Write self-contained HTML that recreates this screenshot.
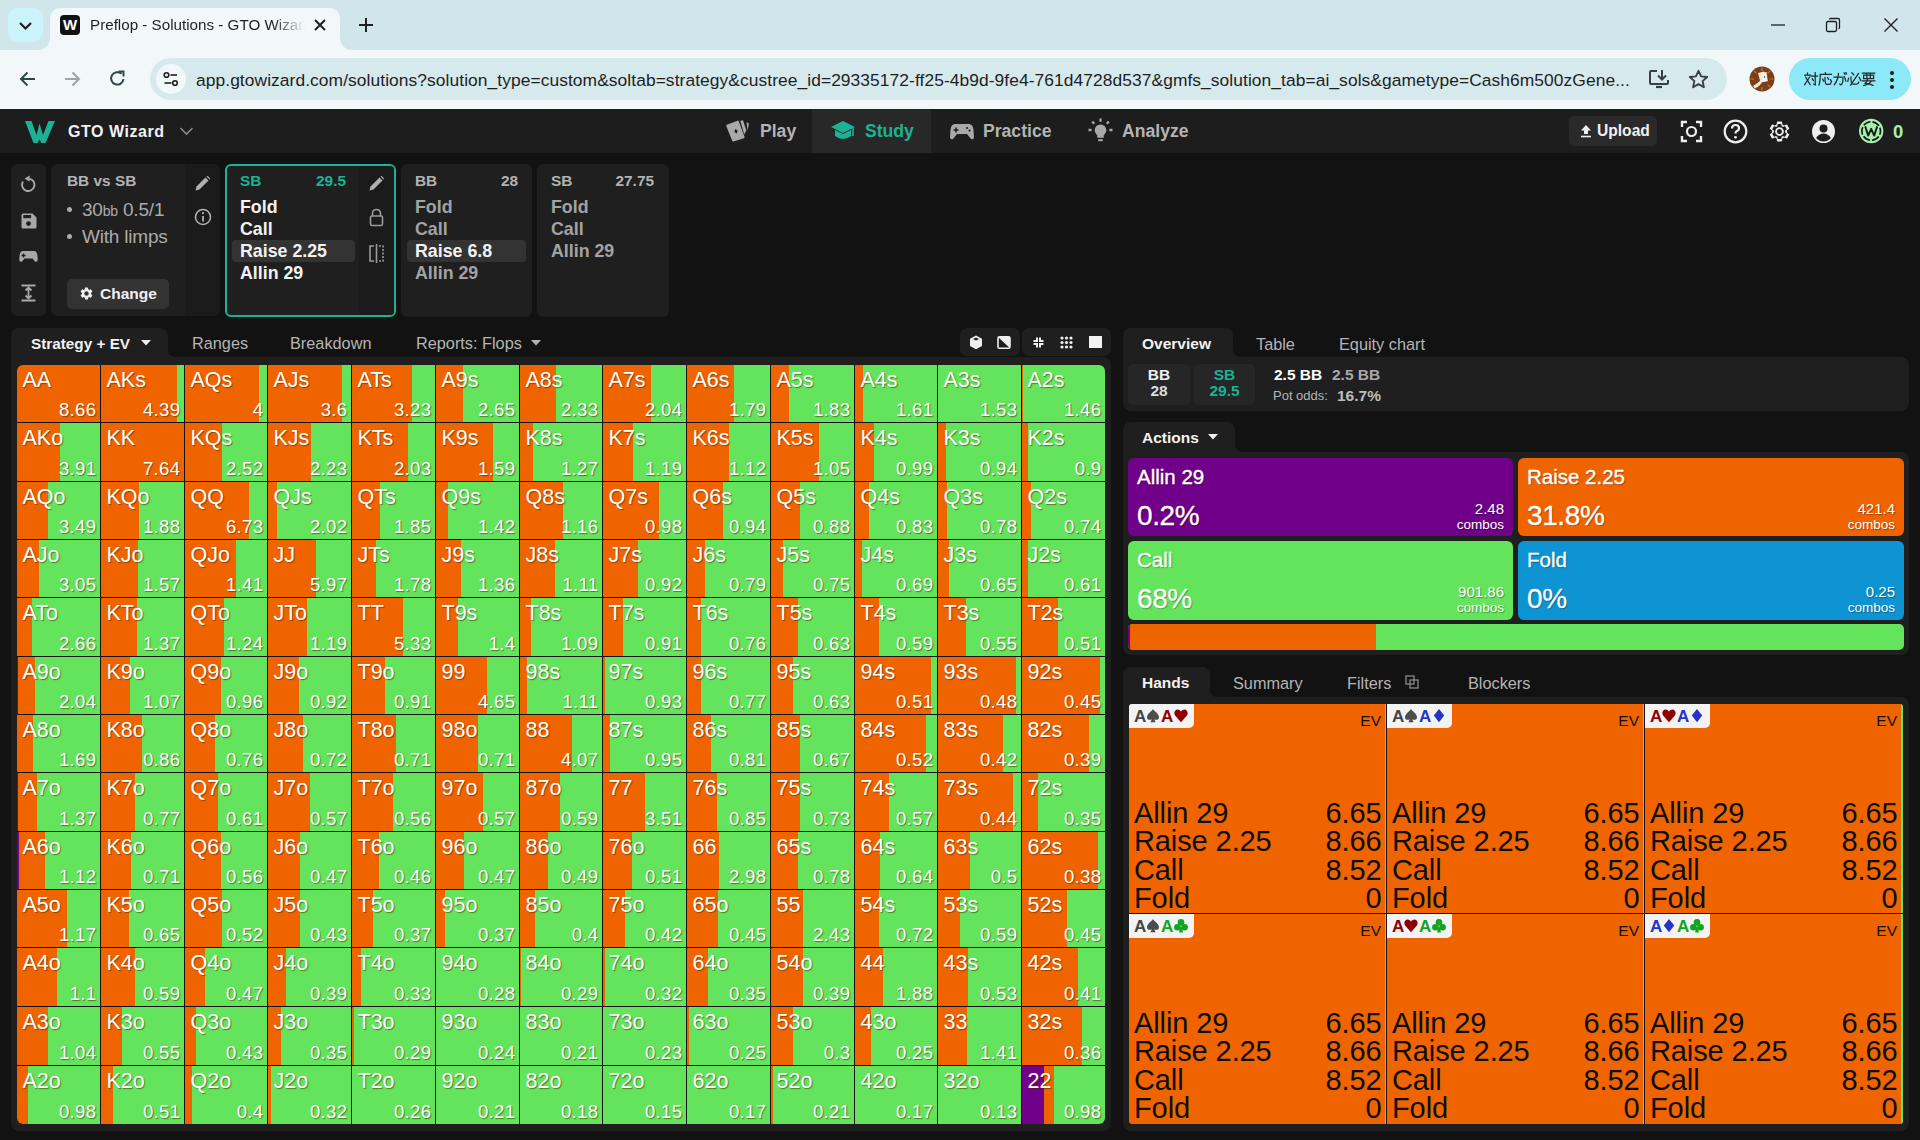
<!DOCTYPE html>
<html><head><meta charset="utf-8">
<style>
*{box-sizing:border-box}
html,body{margin:0;padding:0}
body{width:1920px;height:1140px;overflow:hidden;background:#121212;font-family:"Liberation Sans",sans-serif;position:relative;color:#fff}
.a{position:absolute}
svg{display:block}
/* chrome */
#tabstrip{left:0;top:0;width:1920px;height:50px;background:#d0e6ea}
#tsbtn{left:8px;top:8px;width:35px;height:34px;border-radius:10px;background:#cbf5fb}
#tab{left:50px;top:8px;width:290px;height:42px;background:#f2f8f9;border-radius:10px 10px 0 0}
#toolbar{left:0;top:50px;width:1920px;height:59px;background:#f2f8f9}
#url{left:150px;top:58px;width:1577px;height:42px;border-radius:21px;background:#d6e9ed}
.urltext{left:196px;top:69.5px;font-size:17.4px;color:#1f1f1f;white-space:nowrap;letter-spacing:0.07px}
#pill{left:1789px;top:58px;width:122px;height:42px;border-radius:21px;background:#8de9f7}
/* header */
#hdr{left:0;top:109px;width:1920px;height:44px;background:#1d1d1d}
.nav{font-size:17.6px;font-weight:bold;color:#b4b4b4;top:121px}
/* top cards */
.panel{background:#1f1f1f;border-radius:6px}
.t16b{font-size:15.4px;font-weight:bold}
.act{font-size:17.8px;font-weight:bold;line-height:22px}
/* grid */
.cell{position:absolute;overflow:hidden}
.cell i{position:absolute;top:0;bottom:0}
.cell b{position:absolute;left:5.5px;top:3px;font-weight:normal;font-size:21.5px;letter-spacing:0px;color:#fff;text-shadow:1px 1px 1px rgba(60,40,0,.55);white-space:nowrap}
.cell u{position:absolute;right:3.6px;bottom:1px;text-decoration:none;font-size:18.5px;letter-spacing:0.35px;color:#fff;text-shadow:1px 1px 1px rgba(60,40,0,.55)}
.tab{font-size:16.3px;color:#b5b5b5}
/* action cards */
.acard{border-radius:6px;overflow:hidden}
.acard .nm{position:absolute;left:9px;top:7px;font-size:20.5px;-webkit-text-stroke:0.35px #fff;color:#fff;text-shadow:1px 1px 1px rgba(0,0,0,.35)}
.acard .pc{position:absolute;left:9px;top:42px;font-size:28px;letter-spacing:-0.4px;-webkit-text-stroke:0.3px #fff;color:#fff;text-shadow:1px 1px 1px rgba(0,0,0,.35)}
.acard .cb{position:absolute;right:9px;top:43px;font-size:15px;text-align:right;line-height:15px;color:#fff;text-shadow:1px 1px 1px rgba(0,0,0,.35)}
.acard .cb span{font-size:13.5px}
/* hand cards */
.hc{position:absolute;background:#f06400;overflow:hidden}
.hc .lb{position:absolute;left:0;top:0;width:65px;height:24px;background:#f3f3f3;border-bottom-right-radius:5px;font-size:17px;font-weight:bold;white-space:nowrap}
.hc .ev{position:absolute;right:5px;top:8px;font-size:15.5px;color:#111}
.hc .rows{position:absolute;left:5px;right:4.5px;top:94.5px;font-size:29px;line-height:28.5px;color:#0d0d0d;letter-spacing:-0.1px}
.hc .rows div{display:flex;justify-content:space-between}
</style></head><body>
<svg width="0" height="0" style="position:absolute"><defs>
<path id="sp" d="M7 0 C8.5 2.5 13 5 13 8.2 C13 10.6 10.6 11.6 8.2 10.3 L9.6 13.3 H4.4 L5.8 10.3 C3.4 11.6 1 10.6 1 8.2 C1 5 5.5 2.5 7 0Z"/>
<path id="he" d="M7 13.2 L1.3 6.8 C-0.6 4.4 0.5 0.6 3.6 0.5 C5.3 0.5 6.4 1.5 7 2.7 C7.6 1.5 8.7 0.5 10.4 0.5 C13.5 0.6 14.6 4.4 12.7 6.8 Z"/>
<path id="di" d="M7 0 L12.2 6.6 L7 13.2 L1.8 6.6 Z"/>
<g id="cl"><circle cx="7" cy="3.4" r="3.3"/><circle cx="3.4" cy="8.2" r="3.3"/><circle cx="10.6" cy="8.2" r="3.3"/><path d="M6.3 8 L5 13.6 H9 L7.7 8Z"/></g>
</defs></svg>

<!-- ============ BROWSER CHROME ============ -->
<div id="tabstrip" class="a"></div>
<div id="tab" class="a"></div>
<div id="toolbar" class="a"></div>
<div class="a" style="left:340px;top:38px;width:12px;height:12px;background:#f2f8f9"></div>
<div class="a" style="left:340px;top:37px;width:13px;height:13px;background:#d0e6ea;border-bottom-left-radius:12px"></div>
<div class="a" style="left:38px;top:38px;width:12px;height:12px;background:#f2f8f9"></div>
<div class="a" style="left:37px;top:37px;width:13px;height:13px;background:#d0e6ea;border-bottom-right-radius:12px"></div>
<div id="tsbtn" class="a"><svg width="35" height="34"><path d="M12 15 L17.5 20.5 L23 15" fill="none" stroke="#1f1f1f" stroke-width="2.2"/></svg></div>
<div class="a" style="left:60px;top:15px;width:20px;height:20px;background:#111;border-radius:4px;color:#fff;font-weight:bold;font-size:15px;text-align:center;line-height:20px">W</div>
<div class="a" style="left:90px;top:16px;font-size:15.2px;color:#1f1f1f;white-space:nowrap;width:215px;overflow:hidden;-webkit-mask-image:linear-gradient(90deg,#000 85%,transparent)">Preflop - Solutions - GTO Wizard</div>
<svg class="a" style="left:313px;top:18px" width="14" height="14"><path d="M2 2 L12 12 M12 2 L2 12" stroke="#1f1f1f" stroke-width="2"/></svg>
<svg class="a" style="left:358px;top:17px" width="16" height="16"><path d="M8 1 V15 M1 8 H15" stroke="#1f1f1f" stroke-width="2"/></svg>
<svg class="a" style="left:1770px;top:17px" width="16" height="16"><path d="M1 8 H15" stroke="#1f1f1f" stroke-width="1.3"/></svg>
<svg class="a" style="left:1825px;top:17px" width="16" height="16"><rect x="1.5" y="4.5" width="10" height="10" rx="1.5" fill="none" stroke="#1f1f1f" stroke-width="1.3"/><path d="M4.5 2.5 Q4.5 1.5 5.5 1.5 H13 Q14.5 1.5 14.5 3 V10.5 Q14.5 11.5 13.5 11.5" fill="none" stroke="#1f1f1f" stroke-width="1.3"/></svg>
<svg class="a" style="left:1883px;top:17px" width="16" height="16"><path d="M1.5 1.5 L14.5 14.5 M14.5 1.5 L1.5 14.5" stroke="#1f1f1f" stroke-width="1.4"/></svg>

<svg class="a" style="left:19px;top:71px" width="17" height="16"><path d="M16 8 H2 M8.5 1.5 L2 8 L8.5 14.5" fill="none" stroke="#2c464c" stroke-width="2"/></svg>
<svg class="a" style="left:64px;top:71px" width="17" height="16"><path d="M1 8 H15 M8.5 1.5 L15 8 L8.5 14.5" fill="none" stroke="#9aa5a8" stroke-width="2"/></svg>
<svg class="a" style="left:109px;top:70px" width="17" height="17"><path d="M14.5 9 A6.2 6.2 0 1 1 12.5 3.8" fill="none" stroke="#2c464c" stroke-width="2"/><path d="M9.5 1.5 H14.5 V6.5" fill="none" stroke="#2c464c" stroke-width="2"/></svg>
<div id="url" class="a"></div>
<div class="a" style="left:156px;top:64px;width:30px;height:30px;border-radius:15px;background:#f2f8f9"></div>
<svg class="a" style="left:163px;top:71px" width="16" height="16"><circle cx="3.5" cy="4" r="2.3" fill="none" stroke="#1f1f1f" stroke-width="1.6"/><path d="M7.5 4 H14" stroke="#1f1f1f" stroke-width="1.6"/><circle cx="12" cy="12" r="2.3" fill="none" stroke="#1f1f1f" stroke-width="1.6"/><path d="M1.5 12 H8.5" stroke="#1f1f1f" stroke-width="1.6"/></svg>
<div class="a urltext">app.gtowizard.com/solutions?solution_type=custom&amp;soltab=strategy&amp;custree_id=29335172-ff25-4b9d-9fe4-761d4728d537&amp;gmfs_solution_tab=ai_sols&amp;gametype=Cash6m500zGene...</div>
<svg class="a" style="left:1648px;top:68px" width="22" height="22"><path d="M9 3 H3 Q2 3 2 4 V15 Q2 16 3 16 H19 Q20 16 20 15 V12" fill="none" stroke="#3a3f41" stroke-width="2"/><path d="M14 2 V11 M10 7.5 L14 11.5 L18 7.5" fill="none" stroke="#3a3f41" stroke-width="2"/><path d="M8 19 H14" stroke="#3a3f41" stroke-width="2.2"/></svg>
<svg class="a" style="left:1688px;top:69px" width="21" height="20"><path d="M10.5 1.8 L13.1 7.4 L19.2 8 L14.6 12.1 L15.9 18.2 L10.5 15.1 L5.1 18.2 L6.4 12.1 L1.8 8 L7.9 7.4 Z" fill="none" stroke="#3a3f41" stroke-width="1.9" stroke-linejoin="round"/></svg>
<svg class="a" style="left:1749px;top:66px" width="26" height="26"><circle cx="13" cy="13" r="12.5" fill="#7a3f16"/><g stroke="#c8773a" stroke-width="1.2"><path d="M13 1.5 V5 M13 21 V24.5 M1.5 13 H5 M21 13 H24.5 M4.9 4.9 L7.4 7.4 M18.6 18.6 L21.1 21.1 M21.1 4.9 L18.6 7.4 M4.9 21.1 L7.4 18.6"/></g><path d="M9 7 L15 5.5 L17.5 15 L11.5 16.5Z" fill="#f3e6d6"/><path d="M12 6.8 L17.5 6 L18.8 15.2 L13.3 16Z" fill="#fbf3ea"/><path d="M4 20 Q9 17 12 14 L14 15.5 Q11 20 6 22.5Z" fill="#f3e6d6"/><path d="M15.5 9.5 L16.4 11.5 L14.9 11.7Z" fill="#5a2a10"/></svg>
<div id="pill" class="a"></div>
<svg class="a" style="left:1804px;top:72px" width="72" height="15" viewBox="0 0 72 15"><g fill="none" stroke="#22282b" stroke-width="1.25" stroke-linecap="round">
<path d="M3.5 0.8 V2.2 M0.6 3.2 H6.6 M1.6 5 L6.2 12.8 M5.6 5 L0.6 12.8 M7.2 4.2 H13.6 M11.2 0.6 V12.8 L9.6 12.2 M8.2 6.6 L9.4 8.6"/>
<g transform="translate(14.4 0)"><path d="M7 0.6 V2.1 M1.6 2.3 H13.2 M1.9 2.3 Q1.9 9.5 0.5 13.2 M4.3 7 L5.3 9.2 M6.6 5.4 Q6.4 12.2 8.3 12.3 H11.3 Q12.4 12.1 12.6 10.4 M9.2 5.6 L10.2 7.4 M12.1 7.6 L13.2 9.8"/></g>
<g transform="translate(28.8 0)"><path d="M1 5 H9.2 Q10.3 5.1 10.2 7.2 Q10 12.2 8 12.8 L6.8 12 M5.7 1.4 Q5.2 8.4 1.4 12.8 M11.2 4.4 Q12.6 6.4 13 9.2 M11.2 0.8 L12.1 2.4 M12.9 0.4 L13.8 2"/></g>
<g transform="translate(43.2 0)"><path d="M4.6 0.8 L6.6 2.8 M11.4 1.4 L3.4 13.2 M3.8 4.8 Q3.4 11.8 5.8 12 H9.6 Q11.2 11.8 11.6 9.8 M1.4 6.2 L0.6 9.4 M12 5.2 L13.6 8.6"/></g>
<g transform="translate(57.6 0)"><path d="M0.6 1 H13.4 M2 3 H12 V6.6 H2 Z M5.3 1 V6.6 M8.7 1 V6.6 M0.6 8.8 H13.4 M6 6.8 Q5.2 9.8 3.6 11.4 Q8.4 12 11.4 13.4 M9.8 8.8 Q8.4 12.2 2 13.6"/></g>
</g></svg>
<svg class="a" style="left:1889px;top:70px" width="6" height="20"><circle cx="3" cy="3" r="2" fill="#1f1f1f"/><circle cx="3" cy="10" r="2" fill="#1f1f1f"/><circle cx="3" cy="17" r="2" fill="#1f1f1f"/></svg>

<!-- ============ APP HEADER ============ -->
<div id="hdr" class="a"></div>
<svg class="a" style="left:24px;top:120px" width="32" height="24"><path d="M1 1 H7.5 L12.5 15 L15.5 3.5 L19 15 L24.5 1 H31 L21.5 23 H17.5 L15.5 19.5 L13.5 23 H9.5 Z" fill="#1bb393"/></svg>
<div class="a" style="left:68px;top:123px;font-size:16px;font-weight:bold;color:#f2f2f2;letter-spacing:0.55px">GTO Wizard</div>
<svg class="a" style="left:179px;top:126px" width="15" height="10"><path d="M1.5 2 L7.5 8 L13.5 2" fill="none" stroke="#8a8a8a" stroke-width="1.6"/></svg>

<svg class="a" style="left:726px;top:120px" width="25" height="24"><path d="M1.2 5.6 L11.8 1.6 L17.6 17.2 L7.2 20.6 Z" fill="#a9a9a9" stroke="#a9a9a9" stroke-width="2" stroke-linejoin="round"/><path d="M9.2 9 L11.6 10.6 L10.8 13.6 L8.4 12 Z" fill="#1d1d1d"/><path d="M14.3 0.8 L17 0.2 L20.3 10.6 L18.2 14.6 Z" fill="#a9a9a9"/><path d="M20.6 2.2 L23 3.4 L21.4 10.6 Z" fill="#a9a9a9"/></svg>
<div class="a nav" style="left:760px">Play</div>
<div class="a" style="left:812px;top:109px;width:119px;height:44px;background:#282828"></div>
<svg class="a" style="left:830px;top:120px" width="26" height="22"><path d="M13 1 L25 7 L13 13 L1 7 Z" fill="#1bb393"/><path d="M5 10 V16 Q13 22 21 16 V10 L13 14 Z" fill="#1bb393"/><path d="M23 8 V16" stroke="#1bb393" stroke-width="1.6"/></svg>
<div class="a nav" style="left:865px;color:#1bb393">Study</div>
<svg class="a" style="left:950px;top:122px" width="24" height="18"><path d="M5 2 H19 Q23 2 23.5 8 L24 15 Q24 18 21 17 L17 12 H7 L3 17 Q0 18 0 15 L0.5 8 Q1 2 5 2Z" fill="#a9a9a9"/><path d="M6 5.5 V10.5 M3.5 8 H8.5" stroke="#1d1d1d" stroke-width="1.5"/><circle cx="17" cy="6" r="1.1" fill="#1d1d1d"/><circle cx="19.5" cy="8.5" r="1.1" fill="#1d1d1d"/></svg>
<div class="a nav" style="left:983px">Practice</div>
<svg class="a" style="left:1088px;top:118px" width="25" height="26"><circle cx="12.5" cy="12.2" r="5.8" fill="#a9a9a9"/><path d="M9.3 15 H15.7 V19.8 H9.3Z" fill="#a9a9a9"/><path d="M10.2 22.2 H14.8" stroke="#a9a9a9" stroke-width="2"/><path d="M12.5 0.5 V3.8 M4.2 3.6 L6.2 5.8 M20.8 3.6 L18.8 5.8 M0.5 12 H3.6 M21.4 12 H24.5" stroke="#a9a9a9" stroke-width="2.3"/></svg>
<div class="a nav" style="left:1122px">Analyze</div>

<div class="a" style="left:1569px;top:116px;width:88px;height:30px;background:#2a2a2a;border-radius:5px"></div>
<svg class="a" style="left:1580px;top:124px" width="12" height="14"><path d="M6 1 L11 6.5 H8 V10 H4 V6.5 H1 Z" fill="#eee"/><path d="M1 12.5 H11" stroke="#eee" stroke-width="1.6"/></svg>
<div class="a" style="left:1597px;top:122px;font-size:15.6px;font-weight:bold;color:#f0f0f0">Upload</div>
<svg class="a" style="left:1680px;top:120px" width="23" height="23"><path d="M2 7 V2 H7 M16 2 H21 V7 M21 16 V21 H16 M7 21 H2 V16" fill="none" stroke="#eee" stroke-width="2.4"/><circle cx="11.5" cy="11.5" r="4.5" fill="none" stroke="#eee" stroke-width="2.2"/></svg>
<svg class="a" style="left:1723px;top:119px" width="25" height="25"><circle cx="12.5" cy="12.5" r="10.8" fill="none" stroke="#eee" stroke-width="2.2"/><path d="M9 9.5 Q9 6 12.5 6 Q16 6 16 9.2 Q16 11.2 13.5 12.3 Q12.5 12.8 12.5 14.5" fill="none" stroke="#eee" stroke-width="2.2"/><circle cx="12.5" cy="18.3" r="1.4" fill="#eee"/></svg>
<svg class="a" style="left:1767px;top:119px" width="25" height="25" viewBox="0 0 24 24"><path fill="#eee" d="M19.14 12.94c.04-.3.06-.61.06-.94 0-.32-.02-.64-.07-.94l2.03-1.58a.49.49 0 0 0 .12-.61l-1.92-3.32a.488.488 0 0 0-.59-.22l-2.39.96c-.5-.38-1.03-.7-1.62-.94l-.36-2.54a.484.484 0 0 0-.48-.41h-3.84c-.24 0-.43.17-.47.41l-.36 2.54c-.59.24-1.13.57-1.62.94l-2.39-.96c-.22-.08-.47 0-.59.22L2.74 8.87c-.12.21-.08.47.12.61l2.03 1.58c-.05.3-.09.63-.09.94s.02.64.07.94l-2.03 1.58a.49.49 0 0 0-.12.61l1.92 3.32c.12.22.37.29.59.22l2.39-.96c.5.38 1.03.7 1.62.94l.36 2.54c.05.24.24.41.48.41h3.84c.24 0 .44-.17.47-.41l.36-2.54c.59-.24 1.13-.56 1.62-.94l2.39.96c.22.08.47 0 .59-.22l1.92-3.32c.12-.22.07-.47-.12-.61l-2.01-1.58zM12 15.6c-1.98 0-3.6-1.62-3.6-3.6s1.62-3.6 3.6-3.6 3.6 1.62 3.6 3.6-1.62 3.6-3.6 3.6z"/><path fill="#1d1d1d" transform="translate(12 12) scale(0.74) translate(-12 -12)" d="M19.14 12.94c.04-.3.06-.61.06-.94 0-.32-.02-.64-.07-.94l2.03-1.58a.49.49 0 0 0 .12-.61l-1.92-3.32a.488.488 0 0 0-.59-.22l-2.39.96c-.5-.38-1.03-.7-1.62-.94l-.36-2.54a.484.484 0 0 0-.48-.41h-3.84c-.24 0-.43.17-.47.41l-.36 2.54c-.59.24-1.13.57-1.62.94l-2.39-.96c-.22-.08-.47 0-.59.22L2.74 8.87c-.12.21-.08.47.12.61l2.03 1.58c-.05.3-.09.63-.09.94s.02.64.07.94l-2.03 1.58a.49.49 0 0 0-.12.61l1.92 3.32c.12.22.37.29.59.22l2.39-.96c.5.38 1.03.7 1.62.94l.36 2.54c.05.24.24.41.48.41h3.84c.24 0 .44-.17.47-.41l.36-2.54c.59-.24 1.13-.56 1.62-.94l2.39.96c.22.08.47 0 .59-.22l1.92-3.32c.12-.22.07-.47-.12-.61l-2.01-1.58zM12 15.6c-1.98 0-3.6-1.62-3.6-3.6s1.62-3.6 3.6-3.6 3.6 1.62 3.6 3.6-1.62 3.6-3.6 3.6z"/><circle cx="12" cy="12" r="3.3" fill="none" stroke="#eee" stroke-width="1.8"/></svg>
<svg class="a" style="left:1811px;top:119px" width="25" height="25"><circle cx="12.5" cy="12.5" r="11.5" fill="#eee"/><circle cx="12.5" cy="9.5" r="4" fill="#1d1d1d"/><path d="M5 19 Q8 14.5 12.5 14.5 Q17 14.5 20 19 Q16.5 22.5 12.5 22.5 Q8.5 22.5 5 19Z" fill="#1d1d1d"/></svg>
<svg class="a" style="left:1858px;top:118px" width="27" height="27"><g transform="translate(13.2 13)"><circle r="12.2" fill="#a6f0ae"/><circle r="9.3" fill="none" stroke="#1a1a1a" stroke-width="1.7" stroke-dasharray="7.74 2" stroke-dashoffset="3.87"/><path d="M-6 -4.6 L-3 4.6 L0 -2.2 L3 4.6 L6 -4.6" fill="none" stroke="#1a1a1a" stroke-width="1.9" stroke-linejoin="round"/></g></svg>
<div class="a" style="left:1893px;top:121px;font-size:18.5px;font-weight:bold;color:#a6f0ae">0</div>

<!-- ============ TOP CARDS ============ -->
<div class="a panel" style="left:11px;top:164px;width:35px;height:152px"></div>
<svg class="a" style="left:20px;top:175px" width="17" height="17"><path d="M8.4 3.6 A6.2 6.2 0 1 1 3.0 6.5" fill="none" stroke="#a8a8a8" stroke-width="1.9"/><path d="M4.6 3.6 L9.6 0.4 L9.6 6.8 Z" fill="#a8a8a8"/></svg>
<svg class="a" style="left:21px;top:213px" width="16" height="16"><path d="M1.5 0.5 H11.5 L15.5 4.5 V14 Q15.5 15.5 14 15.5 H2 Q0.5 15.5 0.5 14 V2 Q0.5 0.5 2 0.5Z" fill="#a8a8a8"/><rect x="2.3" y="2" width="7.8" height="3.2" fill="#1f1f1f"/><circle cx="7.5" cy="10.6" r="2.4" fill="#1f1f1f"/></svg>
<svg class="a" style="left:19px;top:250px" width="19" height="13"><path d="M4 1 H15 Q18 1 18.5 6 L18.7 10 Q18.5 12.5 16 11.5 L13.5 8.5 H5.5 L3 11.5 Q0.5 12.5 0.3 10 L0.5 6 Q1 1 4 1Z" fill="#a8a8a8"/><path d="M4.5 3.5 V7.5 M2.5 5.5 H6.5" stroke="#1f1f1f" stroke-width="1.3"/></svg>
<svg class="a" style="left:20px;top:284px" width="17" height="18"><path d="M1.5 1.5 H15.5 M1.5 16.5 H15.5" stroke="#a8a8a8" stroke-width="1.8"/><path d="M8.5 4 V14 M5.5 6.5 L8.5 3.5 L11.5 6.5 M5.5 11.5 L8.5 14.5 L11.5 11.5" fill="none" stroke="#a8a8a8" stroke-width="1.8"/></svg>

<div class="a panel" style="left:51px;top:164px;width:169px;height:152px"></div>
<div class="a" style="left:185px;top:164px;width:35px;height:152px;background:#1b1b1b;border-radius:0 6px 6px 0"></div>
<div class="a t16b" style="left:67px;top:172px;color:#b3b3b3">BB vs SB</div>
<div class="a" style="left:67px;top:207px;width:5px;height:5px;border-radius:3px;background:#ababab"></div><div class="a" style="left:67px;top:234px;width:5px;height:5px;border-radius:3px;background:#ababab"></div>
<div class="a" style="left:82px;top:197px;font-size:19px;color:#ababab;line-height:26px;white-space:nowrap;letter-spacing:-0.2px">30<span style="font-size:14px">bb</span> 0.5/1<br>With limps</div>
<div class="a" style="left:67px;top:279px;width:102px;height:30px;background:#333;border-radius:5px"></div>
<svg class="a" style="left:79px;top:286px" width="15" height="15" viewBox="0 0 24 24"><path fill="#eee" d="M19.14 12.94c.04-.3.06-.61.06-.94 0-.32-.02-.64-.07-.94l2.03-1.58a.49.49 0 0 0 .12-.61l-1.92-3.32a.488.488 0 0 0-.59-.22l-2.39.96c-.5-.38-1.03-.7-1.62-.94l-.36-2.54a.484.484 0 0 0-.48-.41h-3.84c-.24 0-.43.17-.47.41l-.36 2.54c-.59.24-1.130.57-1.62.94l-2.39-.96c-.22-.08-.47 0-.59.22L2.74 8.87c-.12.21-.08.47.12.61l2.03 1.58c-.05.3-.09.63-.09.94s.02.64.07.94l-2.03 1.58a.49.49 0 0 0-.12.61l1.92 3.32c.12.22.37.29.59.22l2.39-.96c.5.38 1.03.7 1.62.94l.36 2.54c.05.24.24.41.48.41h3.84c.24 0 .44-.17.47-.41l.36-2.54c.59-.24 1.13-.56 1.62-.94l2.39.96c.22.08.47 0 .59-.22l1.92-3.32c.12-.22.07-.47-.12-.61l-2.01-1.58zM12 15.6c-1.98 0-3.6-1.62-3.6-3.6s1.62-3.6 3.6-3.6 3.6 1.62 3.6 3.6-1.62 3.6-3.6 3.6z"/></svg>
<div class="a" style="left:100px;top:285px;font-size:15.5px;font-weight:bold;color:#f0f0f0">Change</div>
<svg class="a" style="left:194px;top:175px" width="17" height="17"><path d="M1.5 15.5 L2.5 11.5 L11.5 2.5 L14.5 5.5 L5.5 14.5 Z" fill="#b0b0b0"/><path d="M12.5 1.5 L13.5 0.8 L16.2 3.5 L15.5 4.5Z" fill="#b0b0b0"/></svg>
<svg class="a" style="left:194px;top:208px" width="18" height="18"><circle cx="9" cy="9" r="7.5" fill="none" stroke="#b0b0b0" stroke-width="1.6"/><path d="M9 8 V13.5" stroke="#b0b0b0" stroke-width="1.8"/><circle cx="9" cy="5.2" r="1.1" fill="#b0b0b0"/></svg>

<!-- SB selected -->
<div class="a" style="left:225px;top:164px;width:171px;height:153px;background:#1f1f1f;border:2px solid #1bb393;border-radius:6px"></div>
<div class="a" style="left:359px;top:166px;width:35px;height:149px;background:#1b1b1b;border-radius:0 4px 4px 0"></div>
<div class="a t16b" style="left:240px;top:172px;color:#1bb393">SB</div>
<div class="a t16b" style="left:300px;top:172px;width:46px;text-align:right;color:#1bb393">29.5</div>
<div class="a" style="left:232px;top:240px;width:123px;height:22px;background:#333;border-radius:4px"></div>
<div class="a act" style="left:240px;top:196px;color:#f2f2f2">Fold<br>Call<br>Raise 2.25<br>Allin 29</div>
<svg class="a" style="left:368px;top:175px" width="17" height="17"><path d="M1.5 15.5 L2.5 11.5 L11.5 2.5 L14.5 5.5 L5.5 14.5 Z" fill="#b0b0b0"/><path d="M12.5 1.5 L13.5 0.8 L16.2 3.5 L15.5 4.5Z" fill="#b0b0b0"/></svg>
<svg class="a" style="left:369px;top:208px" width="15" height="19"><path d="M3.5 8 V5.5 Q3.5 1.5 7.5 1.5 Q11.5 1.5 11.5 5.5 V8" fill="none" stroke="#9a9a9a" stroke-width="1.6"/><rect x="1.5" y="8" width="12" height="9.5" rx="1.5" fill="none" stroke="#9a9a9a" stroke-width="1.6"/></svg>
<svg class="a" style="left:368px;top:244px" width="17" height="19"><path d="M6 2 H2 V17 H6" fill="none" stroke="#9a9a9a" stroke-width="1.6"/><path d="M8.5 0 V19" stroke="#9a9a9a" stroke-width="1.6"/><path d="M11 2 H15 V17 H11" fill="none" stroke="#9a9a9a" stroke-width="1.6" stroke-dasharray="2 1.5"/></svg>

<!-- BB card -->
<div class="a panel" style="left:401px;top:164px;width:131px;height:153px"></div>
<div class="a t16b" style="left:415px;top:172px;color:#b3b3b3">BB</div>
<div class="a t16b" style="left:478px;top:172px;width:40px;text-align:right;color:#b3b3b3">28</div>
<div class="a" style="left:407px;top:240px;width:119px;height:22px;background:#333;border-radius:4px"></div>
<div class="a act" style="left:415px;top:196px;color:#a3a3a3">Fold<br>Call<br><span style="color:#f2f2f2">Raise 6.8</span><br>Allin 29</div>

<!-- SB card 3 -->
<div class="a panel" style="left:537px;top:164px;width:132px;height:153px"></div>
<div class="a t16b" style="left:551px;top:172px;color:#b3b3b3">SB</div>
<div class="a t16b" style="left:600px;top:172px;width:54px;text-align:right;color:#b3b3b3">27.75</div>
<div class="a act" style="left:551px;top:196px;color:#a3a3a3">Fold<br>Call<br>Allin 29</div>

<!-- ============ LEFT MAIN PANEL ============ -->
<div class="a panel" style="left:11px;top:357px;width:1100px;height:774px;border-radius:0 8px 8px 8px"></div>
<div class="a" style="left:11px;top:328px;width:157px;height:40px;background:#1f1f1f;border-radius:8px 8px 0 0"></div>
<div class="a" style="left:168px;top:350px;width:7px;height:7px;background:#1f1f1f"></div><div class="a" style="left:168px;top:349px;width:8px;height:8px;background:#121212;border-bottom-left-radius:7px"></div>
<div class="a" style="left:31px;top:335px;font-size:15.3px;font-weight:bold;color:#f2f2f2">Strategy + EV</div>
<svg class="a" style="left:141px;top:340px" width="11" height="6"><path d="M0 0 H10 L5 5.5Z" fill="#eee"/></svg>
<div class="a tab" style="left:192px;top:334px">Ranges</div>
<div class="a tab" style="left:290px;top:334px">Breakdown</div>
<div class="a tab" style="left:416px;top:334px">Reports: Flops</div>
<svg class="a" style="left:531px;top:340px" width="11" height="6"><path d="M0 0 H10 L5 5.5Z" fill="#b5b5b5"/></svg>

<div class="a" style="left:960px;top:328px;width:60px;height:28px;background:#1f1f1f;border-radius:7px"></div>
<div class="a" style="left:1022px;top:328px;width:89px;height:28px;background:#1f1f1f;border-radius:7px"></div>
<svg class="a" style="left:969px;top:335px" width="14" height="15"><path d="M7 0.5 L13 3.8 V11 L7 14.3 L1 11 V3.8 Z" fill="#eee"/><path d="M7 2.6 L10 4 L7 5.4 L4 4Z" fill="#1f1f1f"/></svg>
<svg class="a" style="left:997px;top:336px" width="14" height="13"><rect x="1" y="0.8" width="12" height="11.4" rx="1.5" fill="none" stroke="#eee" stroke-width="1.6"/><path d="M1 1 L13 12.2 H1Z" fill="#eee" transform="rotate(180 7 6.6)"/></svg>
<svg class="a" style="left:1033px;top:337px" width="11" height="11"><path d="M0.5 4 H4 V0.5 M7 0.5 V4 H10.5 M0.5 7 H4 V10.5 M7 10.5 V7 H10.5" fill="none" stroke="#eee" stroke-width="2"/></svg>
<svg class="a" style="left:1060px;top:336px" width="13" height="13"><g fill="#eee"><circle cx="2" cy="2" r="1.6"/><circle cx="6.5" cy="2" r="1.6"/><circle cx="11" cy="2" r="1.6"/><circle cx="2" cy="6.5" r="1.6"/><circle cx="6.5" cy="6.5" r="1.6"/><circle cx="11" cy="6.5" r="1.6"/><circle cx="2" cy="11" r="1.6"/><circle cx="6.5" cy="11" r="1.6"/><circle cx="11" cy="11" r="1.6"/></g></svg>
<div class="a" style="left:1089px;top:336px;width:13px;height:12px;background:#f2f2f2"></div>

<div class="a" style="left:17px;top:365px;width:1088px;height:759px;background:#111;border-radius:6px"></div>
<div class="cell" style="left:17px;top:365px;width:83px;height:57px;border-top-left-radius:6px;"><i style="left:0px;width:83px;background:#f06400"></i><b>AA</b><u>8.66</u></div>
<div class="cell" style="left:101px;top:365px;width:83px;height:57px;"><i style="left:0px;width:76px;background:#f06400"></i><i style="left:76px;width:7px;background:#64e45c"></i><b>AKs</b><u>4.39</u></div>
<div class="cell" style="left:185px;top:365px;width:82px;height:57px;"><i style="left:0px;width:74px;background:#f06400"></i><i style="left:74px;width:8px;background:#64e45c"></i><b>AQs</b><u>4</u></div>
<div class="cell" style="left:268px;top:365px;width:83px;height:57px;"><i style="left:0px;width:74px;background:#f06400"></i><i style="left:74px;width:9px;background:#64e45c"></i><b>AJs</b><u>3.6</u></div>
<div class="cell" style="left:352px;top:365px;width:83px;height:57px;"><i style="left:0px;width:60px;background:#f06400"></i><i style="left:60px;width:23px;background:#64e45c"></i><b>ATs</b><u>3.23</u></div>
<div class="cell" style="left:436px;top:365px;width:83px;height:57px;"><i style="left:0px;width:27px;background:#f06400"></i><i style="left:27px;width:56px;background:#64e45c"></i><b>A9s</b><u>2.65</u></div>
<div class="cell" style="left:520px;top:365px;width:82px;height:57px;"><i style="left:0px;width:36px;background:#f06400"></i><i style="left:36px;width:46px;background:#64e45c"></i><b>A8s</b><u>2.33</u></div>
<div class="cell" style="left:603px;top:365px;width:83px;height:57px;"><i style="left:0px;width:48px;background:#f06400"></i><i style="left:48px;width:35px;background:#64e45c"></i><b>A7s</b><u>2.04</u></div>
<div class="cell" style="left:687px;top:365px;width:83px;height:57px;"><i style="left:0px;width:47px;background:#f06400"></i><i style="left:47px;width:36px;background:#64e45c"></i><b>A6s</b><u>1.79</u></div>
<div class="cell" style="left:771px;top:365px;width:83px;height:57px;"><i style="left:0px;width:18px;background:#f06400"></i><i style="left:18px;width:65px;background:#64e45c"></i><b>A5s</b><u>1.83</u></div>
<div class="cell" style="left:855px;top:365px;width:82px;height:57px;"><i style="left:0px;width:8px;background:#f06400"></i><i style="left:8px;width:74px;background:#64e45c"></i><b>A4s</b><u>1.61</u></div>
<div class="cell" style="left:938px;top:365px;width:83px;height:57px;"><i style="left:0px;width:83px;background:#64e45c"></i><b>A3s</b><u>1.53</u></div>
<div class="cell" style="left:1022px;top:365px;width:83px;height:57px;border-top-right-radius:6px;"><i style="left:0px;width:1px;background:#f06400"></i><i style="left:1px;width:82px;background:#64e45c"></i><b>A2s</b><u>1.46</u></div>
<div class="cell" style="left:17px;top:423px;width:83px;height:58px;"><i style="left:0px;width:43px;background:#f06400"></i><i style="left:43px;width:40px;background:#64e45c"></i><b>AKo</b><u>3.91</u></div>
<div class="cell" style="left:101px;top:423px;width:83px;height:58px;"><i style="left:0px;width:83px;background:#f06400"></i><b>KK</b><u>7.64</u></div>
<div class="cell" style="left:185px;top:423px;width:82px;height:58px;"><i style="left:0px;width:37px;background:#f06400"></i><i style="left:37px;width:45px;background:#64e45c"></i><b>KQs</b><u>2.52</u></div>
<div class="cell" style="left:268px;top:423px;width:83px;height:58px;"><i style="left:0px;width:43px;background:#f06400"></i><i style="left:43px;width:40px;background:#64e45c"></i><b>KJs</b><u>2.23</u></div>
<div class="cell" style="left:352px;top:423px;width:83px;height:58px;"><i style="left:0px;width:56px;background:#f06400"></i><i style="left:56px;width:27px;background:#64e45c"></i><b>KTs</b><u>2.03</u></div>
<div class="cell" style="left:436px;top:423px;width:83px;height:58px;"><i style="left:0px;width:57px;background:#f06400"></i><i style="left:57px;width:26px;background:#64e45c"></i><b>K9s</b><u>1.59</u></div>
<div class="cell" style="left:520px;top:423px;width:82px;height:58px;"><i style="left:0px;width:13px;background:#f06400"></i><i style="left:13px;width:69px;background:#64e45c"></i><b>K8s</b><u>1.27</u></div>
<div class="cell" style="left:603px;top:423px;width:83px;height:58px;"><i style="left:0px;width:30px;background:#f06400"></i><i style="left:30px;width:53px;background:#64e45c"></i><b>K7s</b><u>1.19</u></div>
<div class="cell" style="left:687px;top:423px;width:83px;height:58px;"><i style="left:0px;width:42px;background:#f06400"></i><i style="left:42px;width:41px;background:#64e45c"></i><b>K6s</b><u>1.12</u></div>
<div class="cell" style="left:771px;top:423px;width:83px;height:58px;"><i style="left:0px;width:48px;background:#f06400"></i><i style="left:48px;width:35px;background:#64e45c"></i><b>K5s</b><u>1.05</u></div>
<div class="cell" style="left:855px;top:423px;width:82px;height:58px;"><i style="left:0px;width:19px;background:#f06400"></i><i style="left:19px;width:63px;background:#64e45c"></i><b>K4s</b><u>0.99</u></div>
<div class="cell" style="left:938px;top:423px;width:83px;height:58px;"><i style="left:0px;width:8px;background:#f06400"></i><i style="left:8px;width:75px;background:#64e45c"></i><b>K3s</b><u>0.94</u></div>
<div class="cell" style="left:1022px;top:423px;width:83px;height:58px;"><i style="left:0px;width:6px;background:#f06400"></i><i style="left:6px;width:77px;background:#64e45c"></i><b>K2s</b><u>0.9</u></div>
<div class="cell" style="left:17px;top:482px;width:83px;height:57px;"><i style="left:0px;width:31px;background:#f06400"></i><i style="left:31px;width:52px;background:#64e45c"></i><b>AQo</b><u>3.49</u></div>
<div class="cell" style="left:101px;top:482px;width:83px;height:57px;"><i style="left:0px;width:38px;background:#f06400"></i><i style="left:38px;width:45px;background:#64e45c"></i><b>KQo</b><u>1.88</u></div>
<div class="cell" style="left:185px;top:482px;width:82px;height:57px;"><i style="left:0px;width:64px;background:#f06400"></i><i style="left:64px;width:18px;background:#64e45c"></i><b>QQ</b><u>6.73</u></div>
<div class="cell" style="left:268px;top:482px;width:83px;height:57px;"><i style="left:0px;width:9px;background:#f06400"></i><i style="left:9px;width:74px;background:#64e45c"></i><b>QJs</b><u>2.02</u></div>
<div class="cell" style="left:352px;top:482px;width:83px;height:57px;"><i style="left:0px;width:28px;background:#f06400"></i><i style="left:28px;width:55px;background:#64e45c"></i><b>QTs</b><u>1.85</u></div>
<div class="cell" style="left:436px;top:482px;width:83px;height:57px;"><i style="left:0px;width:12px;background:#f06400"></i><i style="left:12px;width:71px;background:#64e45c"></i><b>Q9s</b><u>1.42</u></div>
<div class="cell" style="left:520px;top:482px;width:82px;height:57px;"><i style="left:0px;width:43px;background:#f06400"></i><i style="left:43px;width:39px;background:#64e45c"></i><b>Q8s</b><u>1.16</u></div>
<div class="cell" style="left:603px;top:482px;width:83px;height:57px;"><i style="left:0px;width:56px;background:#f06400"></i><i style="left:56px;width:27px;background:#64e45c"></i><b>Q7s</b><u>0.98</u></div>
<div class="cell" style="left:687px;top:482px;width:83px;height:57px;"><i style="left:0px;width:36px;background:#f06400"></i><i style="left:36px;width:47px;background:#64e45c"></i><b>Q6s</b><u>0.94</u></div>
<div class="cell" style="left:771px;top:482px;width:83px;height:57px;"><i style="left:0px;width:29px;background:#f06400"></i><i style="left:29px;width:54px;background:#64e45c"></i><b>Q5s</b><u>0.88</u></div>
<div class="cell" style="left:855px;top:482px;width:82px;height:57px;"><i style="left:0px;width:14px;background:#f06400"></i><i style="left:14px;width:68px;background:#64e45c"></i><b>Q4s</b><u>0.83</u></div>
<div class="cell" style="left:938px;top:482px;width:83px;height:57px;"><i style="left:0px;width:9px;background:#f06400"></i><i style="left:9px;width:74px;background:#64e45c"></i><b>Q3s</b><u>0.78</u></div>
<div class="cell" style="left:1022px;top:482px;width:83px;height:57px;"><i style="left:0px;width:9px;background:#f06400"></i><i style="left:9px;width:74px;background:#64e45c"></i><b>Q2s</b><u>0.74</u></div>
<div class="cell" style="left:17px;top:540px;width:83px;height:57px;"><i style="left:0px;width:22px;background:#f06400"></i><i style="left:22px;width:61px;background:#64e45c"></i><b>AJo</b><u>3.05</u></div>
<div class="cell" style="left:101px;top:540px;width:83px;height:57px;"><i style="left:0px;width:37px;background:#f06400"></i><i style="left:37px;width:46px;background:#64e45c"></i><b>KJo</b><u>1.57</u></div>
<div class="cell" style="left:185px;top:540px;width:82px;height:57px;"><i style="left:0px;width:51px;background:#f06400"></i><i style="left:51px;width:31px;background:#64e45c"></i><b>QJo</b><u>1.41</u></div>
<div class="cell" style="left:268px;top:540px;width:83px;height:57px;"><i style="left:0px;width:48px;background:#f06400"></i><i style="left:48px;width:35px;background:#64e45c"></i><b>JJ</b><u>5.97</u></div>
<div class="cell" style="left:352px;top:540px;width:83px;height:57px;"><i style="left:0px;width:24px;background:#f06400"></i><i style="left:24px;width:59px;background:#64e45c"></i><b>JTs</b><u>1.78</u></div>
<div class="cell" style="left:436px;top:540px;width:83px;height:57px;"><i style="left:0px;width:25px;background:#f06400"></i><i style="left:25px;width:58px;background:#64e45c"></i><b>J9s</b><u>1.36</u></div>
<div class="cell" style="left:520px;top:540px;width:82px;height:57px;"><i style="left:0px;width:35px;background:#f06400"></i><i style="left:35px;width:47px;background:#64e45c"></i><b>J8s</b><u>1.11</u></div>
<div class="cell" style="left:603px;top:540px;width:83px;height:57px;"><i style="left:0px;width:35px;background:#f06400"></i><i style="left:35px;width:48px;background:#64e45c"></i><b>J7s</b><u>0.92</u></div>
<div class="cell" style="left:687px;top:540px;width:83px;height:57px;"><i style="left:0px;width:18px;background:#f06400"></i><i style="left:18px;width:65px;background:#64e45c"></i><b>J6s</b><u>0.79</u></div>
<div class="cell" style="left:771px;top:540px;width:83px;height:57px;"><i style="left:0px;width:12px;background:#f06400"></i><i style="left:12px;width:71px;background:#64e45c"></i><b>J5s</b><u>0.75</u></div>
<div class="cell" style="left:855px;top:540px;width:82px;height:57px;"><i style="left:0px;width:7px;background:#f06400"></i><i style="left:7px;width:75px;background:#64e45c"></i><b>J4s</b><u>0.69</u></div>
<div class="cell" style="left:938px;top:540px;width:83px;height:57px;"><i style="left:0px;width:11px;background:#f06400"></i><i style="left:11px;width:72px;background:#64e45c"></i><b>J3s</b><u>0.65</u></div>
<div class="cell" style="left:1022px;top:540px;width:83px;height:57px;"><i style="left:0px;width:6px;background:#f06400"></i><i style="left:6px;width:77px;background:#64e45c"></i><b>J2s</b><u>0.61</u></div>
<div class="cell" style="left:17px;top:598px;width:83px;height:58px;"><i style="left:0px;width:15px;background:#f06400"></i><i style="left:15px;width:68px;background:#64e45c"></i><b>ATo</b><u>2.66</u></div>
<div class="cell" style="left:101px;top:598px;width:83px;height:58px;"><i style="left:0px;width:36px;background:#f06400"></i><i style="left:36px;width:47px;background:#64e45c"></i><b>KTo</b><u>1.37</u></div>
<div class="cell" style="left:185px;top:598px;width:82px;height:58px;"><i style="left:0px;width:39px;background:#f06400"></i><i style="left:39px;width:43px;background:#64e45c"></i><b>QTo</b><u>1.24</u></div>
<div class="cell" style="left:268px;top:598px;width:83px;height:58px;"><i style="left:0px;width:39px;background:#f06400"></i><i style="left:39px;width:44px;background:#64e45c"></i><b>JTo</b><u>1.19</u></div>
<div class="cell" style="left:352px;top:598px;width:83px;height:58px;"><i style="left:0px;width:51px;background:#f06400"></i><i style="left:51px;width:32px;background:#64e45c"></i><b>TT</b><u>5.33</u></div>
<div class="cell" style="left:436px;top:598px;width:83px;height:58px;"><i style="left:0px;width:22px;background:#f06400"></i><i style="left:22px;width:61px;background:#64e45c"></i><b>T9s</b><u>1.4</u></div>
<div class="cell" style="left:520px;top:598px;width:82px;height:58px;"><i style="left:0px;width:11px;background:#f06400"></i><i style="left:11px;width:71px;background:#64e45c"></i><b>T8s</b><u>1.09</u></div>
<div class="cell" style="left:603px;top:598px;width:83px;height:58px;"><i style="left:0px;width:20px;background:#f06400"></i><i style="left:20px;width:63px;background:#64e45c"></i><b>T7s</b><u>0.91</u></div>
<div class="cell" style="left:687px;top:598px;width:83px;height:58px;"><i style="left:0px;width:14px;background:#f06400"></i><i style="left:14px;width:69px;background:#64e45c"></i><b>T6s</b><u>0.76</u></div>
<div class="cell" style="left:771px;top:598px;width:83px;height:58px;"><i style="left:0px;width:27px;background:#f06400"></i><i style="left:27px;width:56px;background:#64e45c"></i><b>T5s</b><u>0.63</u></div>
<div class="cell" style="left:855px;top:598px;width:82px;height:58px;"><i style="left:0px;width:24px;background:#f06400"></i><i style="left:24px;width:58px;background:#64e45c"></i><b>T4s</b><u>0.59</u></div>
<div class="cell" style="left:938px;top:598px;width:83px;height:58px;"><i style="left:0px;width:28px;background:#f06400"></i><i style="left:28px;width:55px;background:#64e45c"></i><b>T3s</b><u>0.55</u></div>
<div class="cell" style="left:1022px;top:598px;width:83px;height:58px;"><i style="left:0px;width:36px;background:#f06400"></i><i style="left:36px;width:47px;background:#64e45c"></i><b>T2s</b><u>0.51</u></div>
<div class="cell" style="left:17px;top:657px;width:83px;height:57px;"><i style="left:0px;width:1px;background:#700089"></i><i style="left:1px;width:17px;background:#f06400"></i><i style="left:18px;width:65px;background:#64e45c"></i><b>A9o</b><u>2.04</u></div>
<div class="cell" style="left:101px;top:657px;width:83px;height:57px;"><i style="left:0px;width:29px;background:#f06400"></i><i style="left:29px;width:54px;background:#64e45c"></i><b>K9o</b><u>1.07</u></div>
<div class="cell" style="left:185px;top:657px;width:82px;height:57px;"><i style="left:0px;width:36px;background:#f06400"></i><i style="left:36px;width:46px;background:#64e45c"></i><b>Q9o</b><u>0.96</u></div>
<div class="cell" style="left:268px;top:657px;width:83px;height:57px;"><i style="left:0px;width:31px;background:#f06400"></i><i style="left:31px;width:52px;background:#64e45c"></i><b>J9o</b><u>0.92</u></div>
<div class="cell" style="left:352px;top:657px;width:83px;height:57px;"><i style="left:0px;width:33px;background:#f06400"></i><i style="left:33px;width:50px;background:#64e45c"></i><b>T9o</b><u>0.91</u></div>
<div class="cell" style="left:436px;top:657px;width:83px;height:57px;"><i style="left:0px;width:51px;background:#f06400"></i><i style="left:51px;width:32px;background:#64e45c"></i><b>99</b><u>4.65</u></div>
<div class="cell" style="left:520px;top:657px;width:82px;height:57px;"><i style="left:0px;width:7px;background:#f06400"></i><i style="left:7px;width:75px;background:#64e45c"></i><b>98s</b><u>1.11</u></div>
<div class="cell" style="left:603px;top:657px;width:83px;height:57px;"><i style="left:0px;width:2px;background:#f06400"></i><i style="left:2px;width:81px;background:#64e45c"></i><b>97s</b><u>0.93</u></div>
<div class="cell" style="left:687px;top:657px;width:83px;height:57px;"><i style="left:0px;width:14px;background:#f06400"></i><i style="left:14px;width:69px;background:#64e45c"></i><b>96s</b><u>0.77</u></div>
<div class="cell" style="left:771px;top:657px;width:83px;height:57px;"><i style="left:0px;width:22px;background:#f06400"></i><i style="left:22px;width:61px;background:#64e45c"></i><b>95s</b><u>0.63</u></div>
<div class="cell" style="left:855px;top:657px;width:82px;height:57px;"><i style="left:0px;width:76px;background:#f06400"></i><i style="left:76px;width:6px;background:#64e45c"></i><b>94s</b><u>0.51</u></div>
<div class="cell" style="left:938px;top:657px;width:83px;height:57px;"><i style="left:0px;width:78px;background:#f06400"></i><i style="left:78px;width:5px;background:#64e45c"></i><b>93s</b><u>0.48</u></div>
<div class="cell" style="left:1022px;top:657px;width:83px;height:57px;"><i style="left:0px;width:78px;background:#f06400"></i><i style="left:78px;width:5px;background:#64e45c"></i><b>92s</b><u>0.45</u></div>
<div class="cell" style="left:17px;top:715px;width:83px;height:57px;"><i style="left:0px;width:16px;background:#f06400"></i><i style="left:16px;width:67px;background:#64e45c"></i><b>A8o</b><u>1.69</u></div>
<div class="cell" style="left:101px;top:715px;width:83px;height:57px;"><i style="left:0px;width:41px;background:#f06400"></i><i style="left:41px;width:42px;background:#64e45c"></i><b>K8o</b><u>0.86</u></div>
<div class="cell" style="left:185px;top:715px;width:82px;height:57px;"><i style="left:0px;width:30px;background:#f06400"></i><i style="left:30px;width:52px;background:#64e45c"></i><b>Q8o</b><u>0.76</u></div>
<div class="cell" style="left:268px;top:715px;width:83px;height:57px;"><i style="left:0px;width:35px;background:#f06400"></i><i style="left:35px;width:48px;background:#64e45c"></i><b>J8o</b><u>0.72</u></div>
<div class="cell" style="left:352px;top:715px;width:83px;height:57px;"><i style="left:0px;width:44px;background:#f06400"></i><i style="left:44px;width:39px;background:#64e45c"></i><b>T8o</b><u>0.71</u></div>
<div class="cell" style="left:436px;top:715px;width:83px;height:57px;"><i style="left:0px;width:42px;background:#f06400"></i><i style="left:42px;width:41px;background:#64e45c"></i><b>98o</b><u>0.71</u></div>
<div class="cell" style="left:520px;top:715px;width:82px;height:57px;"><i style="left:0px;width:52px;background:#f06400"></i><i style="left:52px;width:30px;background:#64e45c"></i><b>88</b><u>4.07</u></div>
<div class="cell" style="left:603px;top:715px;width:83px;height:57px;"><i style="left:0px;width:7px;background:#f06400"></i><i style="left:7px;width:76px;background:#64e45c"></i><b>87s</b><u>0.95</u></div>
<div class="cell" style="left:687px;top:715px;width:83px;height:57px;"><i style="left:0px;width:24px;background:#f06400"></i><i style="left:24px;width:59px;background:#64e45c"></i><b>86s</b><u>0.81</u></div>
<div class="cell" style="left:771px;top:715px;width:83px;height:57px;"><i style="left:0px;width:29px;background:#f06400"></i><i style="left:29px;width:54px;background:#64e45c"></i><b>85s</b><u>0.67</u></div>
<div class="cell" style="left:855px;top:715px;width:82px;height:57px;"><i style="left:0px;width:71px;background:#f06400"></i><i style="left:71px;width:11px;background:#64e45c"></i><b>84s</b><u>0.52</u></div>
<div class="cell" style="left:938px;top:715px;width:83px;height:57px;"><i style="left:0px;width:65px;background:#f06400"></i><i style="left:65px;width:18px;background:#64e45c"></i><b>83s</b><u>0.42</u></div>
<div class="cell" style="left:1022px;top:715px;width:83px;height:57px;"><i style="left:0px;width:67px;background:#f06400"></i><i style="left:67px;width:16px;background:#64e45c"></i><b>82s</b><u>0.39</u></div>
<div class="cell" style="left:17px;top:773px;width:83px;height:58px;"><i style="left:0px;width:1px;background:#700089"></i><i style="left:1px;width:19px;background:#f06400"></i><i style="left:20px;width:63px;background:#64e45c"></i><b>A7o</b><u>1.37</u></div>
<div class="cell" style="left:101px;top:773px;width:83px;height:58px;"><i style="left:0px;width:34px;background:#f06400"></i><i style="left:34px;width:49px;background:#64e45c"></i><b>K7o</b><u>0.77</u></div>
<div class="cell" style="left:185px;top:773px;width:82px;height:58px;"><i style="left:0px;width:33px;background:#f06400"></i><i style="left:33px;width:49px;background:#64e45c"></i><b>Q7o</b><u>0.61</u></div>
<div class="cell" style="left:268px;top:773px;width:83px;height:58px;"><i style="left:0px;width:42px;background:#f06400"></i><i style="left:42px;width:41px;background:#64e45c"></i><b>J7o</b><u>0.57</u></div>
<div class="cell" style="left:352px;top:773px;width:83px;height:58px;"><i style="left:0px;width:41px;background:#f06400"></i><i style="left:41px;width:42px;background:#64e45c"></i><b>T7o</b><u>0.56</u></div>
<div class="cell" style="left:436px;top:773px;width:83px;height:58px;"><i style="left:0px;width:47px;background:#f06400"></i><i style="left:47px;width:36px;background:#64e45c"></i><b>97o</b><u>0.57</u></div>
<div class="cell" style="left:520px;top:773px;width:82px;height:58px;"><i style="left:0px;width:40px;background:#f06400"></i><i style="left:40px;width:42px;background:#64e45c"></i><b>87o</b><u>0.59</u></div>
<div class="cell" style="left:603px;top:773px;width:83px;height:58px;"><i style="left:0px;width:42px;background:#f06400"></i><i style="left:42px;width:41px;background:#64e45c"></i><b>77</b><u>3.51</u></div>
<div class="cell" style="left:687px;top:773px;width:83px;height:58px;"><i style="left:0px;width:30px;background:#f06400"></i><i style="left:30px;width:53px;background:#64e45c"></i><b>76s</b><u>0.85</u></div>
<div class="cell" style="left:771px;top:773px;width:83px;height:58px;"><i style="left:0px;width:29px;background:#f06400"></i><i style="left:29px;width:54px;background:#64e45c"></i><b>75s</b><u>0.73</u></div>
<div class="cell" style="left:855px;top:773px;width:82px;height:58px;"><i style="left:0px;width:34px;background:#f06400"></i><i style="left:34px;width:48px;background:#64e45c"></i><b>74s</b><u>0.57</u></div>
<div class="cell" style="left:938px;top:773px;width:83px;height:58px;"><i style="left:0px;width:75px;background:#f06400"></i><i style="left:75px;width:8px;background:#64e45c"></i><b>73s</b><u>0.44</u></div>
<div class="cell" style="left:1022px;top:773px;width:83px;height:58px;"><i style="left:0px;width:16px;background:#f06400"></i><i style="left:16px;width:67px;background:#64e45c"></i><b>72s</b><u>0.35</u></div>
<div class="cell" style="left:17px;top:832px;width:83px;height:57px;"><i style="left:0px;width:2px;background:#700089"></i><i style="left:2px;width:26px;background:#f06400"></i><i style="left:28px;width:55px;background:#64e45c"></i><b>A6o</b><u>1.12</u></div>
<div class="cell" style="left:101px;top:832px;width:83px;height:57px;"><i style="left:0px;width:30px;background:#f06400"></i><i style="left:30px;width:53px;background:#64e45c"></i><b>K6o</b><u>0.71</u></div>
<div class="cell" style="left:185px;top:832px;width:82px;height:57px;"><i style="left:0px;width:36px;background:#f06400"></i><i style="left:36px;width:46px;background:#64e45c"></i><b>Q6o</b><u>0.56</u></div>
<div class="cell" style="left:268px;top:832px;width:83px;height:57px;"><i style="left:0px;width:32px;background:#f06400"></i><i style="left:32px;width:51px;background:#64e45c"></i><b>J6o</b><u>0.47</u></div>
<div class="cell" style="left:352px;top:832px;width:83px;height:57px;"><i style="left:0px;width:27px;background:#f06400"></i><i style="left:27px;width:56px;background:#64e45c"></i><b>T6o</b><u>0.46</u></div>
<div class="cell" style="left:436px;top:832px;width:83px;height:57px;"><i style="left:0px;width:28px;background:#f06400"></i><i style="left:28px;width:55px;background:#64e45c"></i><b>96o</b><u>0.47</u></div>
<div class="cell" style="left:520px;top:832px;width:82px;height:57px;"><i style="left:0px;width:28px;background:#f06400"></i><i style="left:28px;width:54px;background:#64e45c"></i><b>86o</b><u>0.49</u></div>
<div class="cell" style="left:603px;top:832px;width:83px;height:57px;"><i style="left:0px;width:29px;background:#f06400"></i><i style="left:29px;width:54px;background:#64e45c"></i><b>76o</b><u>0.51</u></div>
<div class="cell" style="left:687px;top:832px;width:83px;height:57px;"><i style="left:0px;width:32px;background:#f06400"></i><i style="left:32px;width:51px;background:#64e45c"></i><b>66</b><u>2.98</u></div>
<div class="cell" style="left:771px;top:832px;width:83px;height:57px;"><i style="left:0px;width:27px;background:#f06400"></i><i style="left:27px;width:56px;background:#64e45c"></i><b>65s</b><u>0.78</u></div>
<div class="cell" style="left:855px;top:832px;width:82px;height:57px;"><i style="left:0px;width:25px;background:#f06400"></i><i style="left:25px;width:57px;background:#64e45c"></i><b>64s</b><u>0.64</u></div>
<div class="cell" style="left:938px;top:832px;width:83px;height:57px;"><i style="left:0px;width:32px;background:#f06400"></i><i style="left:32px;width:51px;background:#64e45c"></i><b>63s</b><u>0.5</u></div>
<div class="cell" style="left:1022px;top:832px;width:83px;height:57px;"><i style="left:0px;width:76px;background:#f06400"></i><i style="left:76px;width:7px;background:#64e45c"></i><b>62s</b><u>0.38</u></div>
<div class="cell" style="left:17px;top:890px;width:83px;height:57px;"><i style="left:0px;width:50px;background:#f06400"></i><i style="left:50px;width:33px;background:#64e45c"></i><b>A5o</b><u>1.17</u></div>
<div class="cell" style="left:101px;top:890px;width:83px;height:57px;"><i style="left:0px;width:28px;background:#f06400"></i><i style="left:28px;width:55px;background:#64e45c"></i><b>K5o</b><u>0.65</u></div>
<div class="cell" style="left:185px;top:890px;width:82px;height:57px;"><i style="left:0px;width:37px;background:#f06400"></i><i style="left:37px;width:45px;background:#64e45c"></i><b>Q5o</b><u>0.52</u></div>
<div class="cell" style="left:268px;top:890px;width:83px;height:57px;"><i style="left:0px;width:32px;background:#f06400"></i><i style="left:32px;width:51px;background:#64e45c"></i><b>J5o</b><u>0.43</u></div>
<div class="cell" style="left:352px;top:890px;width:83px;height:57px;"><i style="left:0px;width:21px;background:#f06400"></i><i style="left:21px;width:62px;background:#64e45c"></i><b>T5o</b><u>0.37</u></div>
<div class="cell" style="left:436px;top:890px;width:83px;height:57px;"><i style="left:0px;width:9px;background:#f06400"></i><i style="left:9px;width:74px;background:#64e45c"></i><b>95o</b><u>0.37</u></div>
<div class="cell" style="left:520px;top:890px;width:82px;height:57px;"><i style="left:0px;width:15px;background:#f06400"></i><i style="left:15px;width:67px;background:#64e45c"></i><b>85o</b><u>0.4</u></div>
<div class="cell" style="left:603px;top:890px;width:83px;height:57px;"><i style="left:0px;width:22px;background:#f06400"></i><i style="left:22px;width:61px;background:#64e45c"></i><b>75o</b><u>0.42</u></div>
<div class="cell" style="left:687px;top:890px;width:83px;height:57px;"><i style="left:0px;width:31px;background:#f06400"></i><i style="left:31px;width:52px;background:#64e45c"></i><b>65o</b><u>0.45</u></div>
<div class="cell" style="left:771px;top:890px;width:83px;height:57px;"><i style="left:0px;width:32px;background:#f06400"></i><i style="left:32px;width:51px;background:#64e45c"></i><b>55</b><u>2.43</u></div>
<div class="cell" style="left:855px;top:890px;width:82px;height:57px;"><i style="left:0px;width:24px;background:#f06400"></i><i style="left:24px;width:58px;background:#64e45c"></i><b>54s</b><u>0.72</u></div>
<div class="cell" style="left:938px;top:890px;width:83px;height:57px;"><i style="left:0px;width:22px;background:#f06400"></i><i style="left:22px;width:61px;background:#64e45c"></i><b>53s</b><u>0.59</u></div>
<div class="cell" style="left:1022px;top:890px;width:83px;height:57px;"><i style="left:0px;width:45px;background:#f06400"></i><i style="left:45px;width:38px;background:#64e45c"></i><b>52s</b><u>0.45</u></div>
<div class="cell" style="left:17px;top:948px;width:83px;height:58px;"><i style="left:0px;width:40px;background:#f06400"></i><i style="left:40px;width:43px;background:#64e45c"></i><b>A4o</b><u>1.1</u></div>
<div class="cell" style="left:101px;top:948px;width:83px;height:58px;"><i style="left:0px;width:34px;background:#f06400"></i><i style="left:34px;width:49px;background:#64e45c"></i><b>K4o</b><u>0.59</u></div>
<div class="cell" style="left:185px;top:948px;width:82px;height:58px;"><i style="left:0px;width:20px;background:#f06400"></i><i style="left:20px;width:62px;background:#64e45c"></i><b>Q4o</b><u>0.47</u></div>
<div class="cell" style="left:268px;top:948px;width:83px;height:58px;"><i style="left:0px;width:18px;background:#f06400"></i><i style="left:18px;width:65px;background:#64e45c"></i><b>J4o</b><u>0.39</u></div>
<div class="cell" style="left:352px;top:948px;width:83px;height:58px;"><i style="left:0px;width:9px;background:#f06400"></i><i style="left:9px;width:74px;background:#64e45c"></i><b>T4o</b><u>0.33</u></div>
<div class="cell" style="left:436px;top:948px;width:83px;height:58px;"><i style="left:0px;width:83px;background:#64e45c"></i><b>94o</b><u>0.28</u></div>
<div class="cell" style="left:520px;top:948px;width:82px;height:58px;"><i style="left:0px;width:1px;background:#f06400"></i><i style="left:1px;width:81px;background:#64e45c"></i><b>84o</b><u>0.29</u></div>
<div class="cell" style="left:603px;top:948px;width:83px;height:58px;"><i style="left:0px;width:2px;background:#f06400"></i><i style="left:2px;width:81px;background:#64e45c"></i><b>74o</b><u>0.32</u></div>
<div class="cell" style="left:687px;top:948px;width:83px;height:58px;"><i style="left:0px;width:21px;background:#f06400"></i><i style="left:21px;width:62px;background:#64e45c"></i><b>64o</b><u>0.35</u></div>
<div class="cell" style="left:771px;top:948px;width:83px;height:58px;"><i style="left:0px;width:32px;background:#f06400"></i><i style="left:32px;width:51px;background:#64e45c"></i><b>54o</b><u>0.39</u></div>
<div class="cell" style="left:855px;top:948px;width:82px;height:58px;"><i style="left:0px;width:28px;background:#f06400"></i><i style="left:28px;width:54px;background:#64e45c"></i><b>44</b><u>1.88</u></div>
<div class="cell" style="left:938px;top:948px;width:83px;height:58px;"><i style="left:0px;width:30px;background:#f06400"></i><i style="left:30px;width:53px;background:#64e45c"></i><b>43s</b><u>0.53</u></div>
<div class="cell" style="left:1022px;top:948px;width:83px;height:58px;"><i style="left:0px;width:56px;background:#f06400"></i><i style="left:56px;width:27px;background:#64e45c"></i><b>42s</b><u>0.41</u></div>
<div class="cell" style="left:17px;top:1007px;width:83px;height:58px;"><i style="left:0px;width:31px;background:#f06400"></i><i style="left:31px;width:52px;background:#64e45c"></i><b>A3o</b><u>1.04</u></div>
<div class="cell" style="left:101px;top:1007px;width:83px;height:58px;"><i style="left:0px;width:21px;background:#f06400"></i><i style="left:21px;width:62px;background:#64e45c"></i><b>K3o</b><u>0.55</u></div>
<div class="cell" style="left:185px;top:1007px;width:82px;height:58px;"><i style="left:0px;width:11px;background:#f06400"></i><i style="left:11px;width:71px;background:#64e45c"></i><b>Q3o</b><u>0.43</u></div>
<div class="cell" style="left:268px;top:1007px;width:83px;height:58px;"><i style="left:0px;width:13px;background:#f06400"></i><i style="left:13px;width:70px;background:#64e45c"></i><b>J3o</b><u>0.35</u></div>
<div class="cell" style="left:352px;top:1007px;width:83px;height:58px;"><i style="left:0px;width:2px;background:#f06400"></i><i style="left:2px;width:81px;background:#64e45c"></i><b>T3o</b><u>0.29</u></div>
<div class="cell" style="left:436px;top:1007px;width:83px;height:58px;"><i style="left:0px;width:83px;background:#64e45c"></i><b>93o</b><u>0.24</u></div>
<div class="cell" style="left:520px;top:1007px;width:82px;height:58px;"><i style="left:0px;width:82px;background:#64e45c"></i><b>83o</b><u>0.21</u></div>
<div class="cell" style="left:603px;top:1007px;width:83px;height:58px;"><i style="left:0px;width:83px;background:#64e45c"></i><b>73o</b><u>0.23</u></div>
<div class="cell" style="left:687px;top:1007px;width:83px;height:58px;"><i style="left:0px;width:2px;background:#f06400"></i><i style="left:2px;width:81px;background:#64e45c"></i><b>63o</b><u>0.25</u></div>
<div class="cell" style="left:771px;top:1007px;width:83px;height:58px;"><i style="left:0px;width:22px;background:#f06400"></i><i style="left:22px;width:61px;background:#64e45c"></i><b>53o</b><u>0.3</u></div>
<div class="cell" style="left:855px;top:1007px;width:82px;height:58px;"><i style="left:0px;width:16px;background:#f06400"></i><i style="left:16px;width:66px;background:#64e45c"></i><b>43o</b><u>0.25</u></div>
<div class="cell" style="left:938px;top:1007px;width:83px;height:58px;"><i style="left:0px;width:29px;background:#f06400"></i><i style="left:29px;width:54px;background:#64e45c"></i><b>33</b><u>1.41</u></div>
<div class="cell" style="left:1022px;top:1007px;width:83px;height:58px;"><i style="left:0px;width:60px;background:#f06400"></i><i style="left:60px;width:23px;background:#64e45c"></i><b>32s</b><u>0.36</u></div>
<div class="cell" style="left:17px;top:1066px;width:83px;height:58px;border-bottom-left-radius:6px;"><i style="left:0px;width:11px;background:#f06400"></i><i style="left:11px;width:72px;background:#64e45c"></i><b>A2o</b><u>0.98</u></div>
<div class="cell" style="left:101px;top:1066px;width:83px;height:58px;"><i style="left:0px;width:12px;background:#f06400"></i><i style="left:12px;width:71px;background:#64e45c"></i><b>K2o</b><u>0.51</u></div>
<div class="cell" style="left:185px;top:1066px;width:82px;height:58px;"><i style="left:0px;width:7px;background:#f06400"></i><i style="left:7px;width:75px;background:#64e45c"></i><b>Q2o</b><u>0.4</u></div>
<div class="cell" style="left:268px;top:1066px;width:83px;height:58px;"><i style="left:0px;width:3px;background:#f06400"></i><i style="left:3px;width:80px;background:#64e45c"></i><b>J2o</b><u>0.32</u></div>
<div class="cell" style="left:352px;top:1066px;width:83px;height:58px;"><i style="left:0px;width:83px;background:#64e45c"></i><b>T2o</b><u>0.26</u></div>
<div class="cell" style="left:436px;top:1066px;width:83px;height:58px;"><i style="left:0px;width:83px;background:#64e45c"></i><b>92o</b><u>0.21</u></div>
<div class="cell" style="left:520px;top:1066px;width:82px;height:58px;"><i style="left:0px;width:82px;background:#64e45c"></i><b>82o</b><u>0.18</u></div>
<div class="cell" style="left:603px;top:1066px;width:83px;height:58px;"><i style="left:0px;width:83px;background:#64e45c"></i><b>72o</b><u>0.15</u></div>
<div class="cell" style="left:687px;top:1066px;width:83px;height:58px;"><i style="left:0px;width:83px;background:#64e45c"></i><b>62o</b><u>0.17</u></div>
<div class="cell" style="left:771px;top:1066px;width:83px;height:58px;"><i style="left:0px;width:2px;background:#f06400"></i><i style="left:2px;width:81px;background:#64e45c"></i><b>52o</b><u>0.21</u></div>
<div class="cell" style="left:855px;top:1066px;width:82px;height:58px;"><i style="left:0px;width:82px;background:#64e45c"></i><b>42o</b><u>0.17</u></div>
<div class="cell" style="left:938px;top:1066px;width:83px;height:58px;"><i style="left:0px;width:83px;background:#64e45c"></i><b>32o</b><u>0.13</u></div>
<div class="cell" style="left:1022px;top:1066px;width:83px;height:58px;border-bottom-right-radius:6px;"><i style="left:0px;width:22px;background:#700089"></i><i style="left:22px;width:10px;background:#f06400"></i><i style="left:32px;width:51px;background:#64e45c"></i><b>22</b><u>0.98</u></div>

<!-- ============ RIGHT PANEL ============ -->
<div class="a" style="left:1123px;top:328px;width:110px;height:40px;background:#1f1f1f;border-radius:8px 8px 0 0"></div>
<div class="a" style="left:1233px;top:350px;width:7px;height:7px;background:#1f1f1f"></div><div class="a" style="left:1233px;top:349px;width:8px;height:8px;background:#121212;border-bottom-left-radius:7px"></div>
<div class="a" style="left:1142px;top:335px;font-size:15.5px;font-weight:bold;color:#f2f2f2">Overview</div>
<div class="a tab" style="left:1256px;top:335px">Table</div>
<div class="a tab" style="left:1339px;top:335px">Equity chart</div>
<div class="a panel" style="left:1123px;top:357px;width:786px;height:54px;border-radius:0 8px 8px 8px"></div>
<div class="a" style="left:1128px;top:364px;width:62px;height:41px;background:#262626;border-radius:5px"></div>
<div class="a" style="left:1194px;top:364px;width:61px;height:41px;background:#262626;border-radius:5px"></div>
<div class="a" style="left:1128px;top:367px;width:62px;text-align:center;font-size:15.5px;font-weight:bold;line-height:16px;color:#f2f2f2">BB<br><span style="color:#dcdcdc">28</span></div>
<div class="a" style="left:1194px;top:367px;width:61px;text-align:center;font-size:15.5px;font-weight:bold;line-height:16px;color:#1bb393">SB<br>29.5</div>
<div class="a" style="left:1274px;top:366px;font-size:15.5px;font-weight:bold;color:#fff">2.5 BB</div>
<div class="a" style="left:1332px;top:366px;font-size:15.5px;font-weight:bold;color:#a9a9a9">2.5 BB</div>
<div class="a" style="left:1273px;top:388px;font-size:13px;color:#b5b5b5">Pot odds:</div>
<div class="a" style="left:1337px;top:387px;font-size:15.5px;font-weight:bold;color:#bdbdbd">16.7%</div>

<div class="a" style="left:1123px;top:422px;width:112px;height:40px;background:#1f1f1f;border-radius:8px 8px 0 0"></div>
<div class="a" style="left:1235px;top:445px;width:7px;height:7px;background:#1f1f1f"></div><div class="a" style="left:1235px;top:444px;width:8px;height:8px;background:#121212;border-bottom-left-radius:7px"></div>
<div class="a" style="left:1142px;top:429px;font-size:15.5px;font-weight:bold;color:#f2f2f2">Actions</div>
<svg class="a" style="left:1208px;top:434px" width="11" height="6"><path d="M0 0 H10 L5 5.5Z" fill="#eee"/></svg>
<div class="a panel" style="left:1123px;top:452px;width:786px;height:203px;border-radius:0 8px 8px 8px"></div>

<div class="a acard" style="left:1128px;top:458px;width:385px;height:78px;background:#700089"><div class="nm">Allin 29</div><div class="pc">0.2%</div><div class="cb">2.48<br><span>combos</span></div></div>
<div class="a acard" style="left:1518px;top:458px;width:386px;height:78px;background:#f06400"><div class="nm">Raise 2.25</div><div class="pc">31.8%</div><div class="cb">421.4<br><span>combos</span></div></div>
<div class="a acard" style="left:1128px;top:541px;width:385px;height:79px;background:#64e45c"><div class="nm">Call</div><div class="pc">68%</div><div class="cb">901.86<br><span>combos</span></div></div>
<div class="a acard" style="left:1518px;top:541px;width:386px;height:79px;background:#0e94d3"><div class="nm">Fold</div><div class="pc">0%</div><div class="cb">0.25<br><span>combos</span></div></div>
<div class="a" style="left:1128px;top:624px;width:776px;height:26px;border-radius:5px;overflow:hidden;background:#64e45c"><div class="a" style="left:0;top:0;width:2px;height:26px;background:#700089"></div><div class="a" style="left:2px;top:0;width:246px;height:26px;background:#f06400"></div></div>

<div class="a" style="left:1123px;top:667px;width:87px;height:40px;background:#1f1f1f;border-radius:8px 8px 0 0"></div>
<div class="a" style="left:1210px;top:690px;width:7px;height:7px;background:#1f1f1f"></div><div class="a" style="left:1210px;top:689px;width:8px;height:8px;background:#121212;border-bottom-left-radius:7px"></div>
<div class="a" style="left:1142px;top:674px;font-size:15.5px;font-weight:bold;color:#f2f2f2">Hands</div>
<div class="a tab" style="left:1233px;top:674px">Summary</div>
<div class="a tab" style="left:1347px;top:674px">Filters</div>
<svg class="a" style="left:1405px;top:675px" width="14" height="14"><rect x="1" y="1" width="8" height="8" fill="none" stroke="#8a8a8a" stroke-width="1.3"/><rect x="5" y="5" width="8" height="8" fill="none" stroke="#8a8a8a" stroke-width="1.3"/></svg>
<div class="a tab" style="left:1468px;top:674px">Blockers</div>
<div class="a panel" style="left:1123px;top:697px;width:786px;height:434px;border-radius:0 8px 8px 8px"></div>
<div class="a" style="left:1129px;top:704px;width:774px;height:420px;background:#111"></div>
<div class="hc" style="left:1129px;top:704px;width:257px;height:209px;border-top-left-radius:3px;"><div class="a" style="right:0;top:0;width:1px;height:100%;background:#64e45c"></div><div class="lb"><span class="a" style="left:5px;top:3px;color:#444">A</span><svg class="a" style="left:17px;top:5px" width="14" height="14" viewBox="0 0 14 14"><use href="#sp" fill="#4d4d4d"/></svg><span class="a" style="left:32px;top:3px;color:#8e0000">A</span><svg class="a" style="left:44.5px;top:5px" width="14" height="14" viewBox="0 0 14 14"><use href="#he" fill="#8e0000"/></svg></div><div class="ev" style="right:5px">EV</div><div class="rows" style="right:4.5px"><div><span>Allin 29</span><span>6.65</span></div><div><span>Raise 2.25</span><span>8.66</span></div><div><span>Call</span><span>8.52</span></div><div><span>Fold</span><span>0</span></div></div></div>
<div class="hc" style="left:1387px;top:704px;width:257px;height:209px;"><div class="a" style="right:0;top:0;width:1px;height:100%;background:#64e45c"></div><div class="lb"><span class="a" style="left:5px;top:3px;color:#444">A</span><svg class="a" style="left:17px;top:5px" width="14" height="14" viewBox="0 0 14 14"><use href="#sp" fill="#4d4d4d"/></svg><span class="a" style="left:32px;top:3px;color:#2434c8">A</span><svg class="a" style="left:44.5px;top:5px" width="14" height="14" viewBox="0 0 14 14"><use href="#di" fill="#2434c8"/></svg></div><div class="ev" style="right:5px">EV</div><div class="rows" style="right:4.5px"><div><span>Allin 29</span><span>6.65</span></div><div><span>Raise 2.25</span><span>8.66</span></div><div><span>Call</span><span>8.52</span></div><div><span>Fold</span><span>0</span></div></div></div>
<div class="hc" style="left:1645px;top:704px;width:258px;height:209px;border-top-right-radius:3px;"><div class="a" style="right:0;top:0;width:2px;height:100%;background:#64e45c"></div><div class="lb"><span class="a" style="left:5px;top:3px;color:#8e0000">A</span><svg class="a" style="left:17px;top:5px" width="14" height="14" viewBox="0 0 14 14"><use href="#he" fill="#8e0000"/></svg><span class="a" style="left:32px;top:3px;color:#2434c8">A</span><svg class="a" style="left:44.5px;top:5px" width="14" height="14" viewBox="0 0 14 14"><use href="#di" fill="#2434c8"/></svg></div><div class="ev" style="right:6px">EV</div><div class="rows" style="right:5.5px"><div><span>Allin 29</span><span>6.65</span></div><div><span>Raise 2.25</span><span>8.66</span></div><div><span>Call</span><span>8.52</span></div><div><span>Fold</span><span>0</span></div></div></div>
<div class="hc" style="left:1129px;top:914px;width:257px;height:210px;border-bottom-left-radius:3px;"><div class="a" style="right:0;top:0;width:1px;height:100%;background:#64e45c"></div><div class="lb"><span class="a" style="left:5px;top:3px;color:#444">A</span><svg class="a" style="left:17px;top:5px" width="14" height="14" viewBox="0 0 14 14"><use href="#sp" fill="#4d4d4d"/></svg><span class="a" style="left:32px;top:3px;color:#12a61e">A</span><svg class="a" style="left:44.5px;top:5px" width="14" height="14" viewBox="0 0 14 14"><use href="#cl" fill="#12a61e"/></svg></div><div class="ev" style="right:5px">EV</div><div class="rows" style="right:4.5px"><div><span>Allin 29</span><span>6.65</span></div><div><span>Raise 2.25</span><span>8.66</span></div><div><span>Call</span><span>8.52</span></div><div><span>Fold</span><span>0</span></div></div></div>
<div class="hc" style="left:1387px;top:914px;width:257px;height:210px;"><div class="a" style="right:0;top:0;width:1px;height:100%;background:#64e45c"></div><div class="lb"><span class="a" style="left:5px;top:3px;color:#8e0000">A</span><svg class="a" style="left:17px;top:5px" width="14" height="14" viewBox="0 0 14 14"><use href="#he" fill="#8e0000"/></svg><span class="a" style="left:32px;top:3px;color:#12a61e">A</span><svg class="a" style="left:44.5px;top:5px" width="14" height="14" viewBox="0 0 14 14"><use href="#cl" fill="#12a61e"/></svg></div><div class="ev" style="right:5px">EV</div><div class="rows" style="right:4.5px"><div><span>Allin 29</span><span>6.65</span></div><div><span>Raise 2.25</span><span>8.66</span></div><div><span>Call</span><span>8.52</span></div><div><span>Fold</span><span>0</span></div></div></div>
<div class="hc" style="left:1645px;top:914px;width:258px;height:210px;border-bottom-right-radius:3px;"><div class="a" style="right:0;top:0;width:2px;height:100%;background:#64e45c"></div><div class="lb"><span class="a" style="left:5px;top:3px;color:#2434c8">A</span><svg class="a" style="left:17px;top:5px" width="14" height="14" viewBox="0 0 14 14"><use href="#di" fill="#2434c8"/></svg><span class="a" style="left:32px;top:3px;color:#12a61e">A</span><svg class="a" style="left:44.5px;top:5px" width="14" height="14" viewBox="0 0 14 14"><use href="#cl" fill="#12a61e"/></svg></div><div class="ev" style="right:6px">EV</div><div class="rows" style="right:5.5px"><div><span>Allin 29</span><span>6.65</span></div><div><span>Raise 2.25</span><span>8.66</span></div><div><span>Call</span><span>8.52</span></div><div><span>Fold</span><span>0</span></div></div></div>

</body></html>
